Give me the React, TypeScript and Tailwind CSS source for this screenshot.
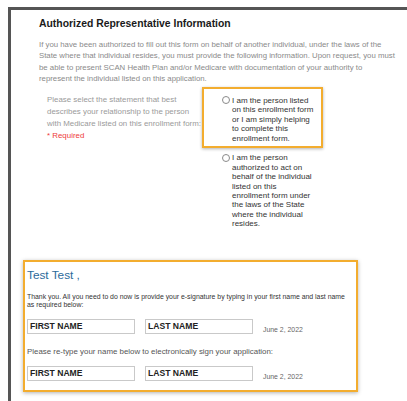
const arial = { fontFamily: '"Liberation Sans", Arial, sans-serif' };

function Radio({ lines }: { lines: string[] }) {
  return (
    <label className="flex items-start gap-[2px]">
      <span className="mt-[0.7px] h-[8px] w-[8px] shrink-0 rounded-full border border-[#8a8a8a] bg-white" />
      <span className="text-[8px] leading-[9.45px] text-[#333]">
        {lines.map((l, i) => (
          <span key={i} className="block whitespace-nowrap">
            {l}
          </span>
        ))}
      </span>
    </label>
  );
}

function NameRow() {
  return (
    <div className="flex items-start">
      <div className="flex h-[15px] w-[108px] items-center border border-[#c9c9c9] pl-[2px] text-[8.6px] font-bold text-[#222]">
        FIRST NAME
      </div>
      <div className="ml-[10px] flex h-[15px] w-[108px] items-center border border-[#c9c9c9] pl-[2px] text-[8.6px] font-bold text-[#222]">
        LAST NAME
      </div>
      <span className="ml-[10px] mt-[7px] text-[6.9px] leading-[8px] text-[#666]">June 2, 2022</span>
    </div>
  );
}

export default function App() {
  return (
    <div className="h-[401px] w-[407px] overflow-hidden bg-white pl-[8px] pt-[7px]" style={arial}>
      <div className="h-full border-l-[3px] border-t-[3px] border-[#555]">
        <div className="pl-[28px] pt-[8px]">
          <h2 className="text-[10.4px] font-bold leading-[12px] text-[#1a1a1a]">
            Authorized Representative Information
          </h2>
          <p className="mt-[9px] text-[7.8px] leading-[11.3px] text-[#8a8a8a]">
            <span className="block whitespace-nowrap">
              If you have been authorized to fill out this form on behalf of another individual, under the laws of the
            </span>
            <span className="block whitespace-nowrap">
              State where that individual resides, you must provide the following information. Upon request, you must
            </span>
            <span className="block whitespace-nowrap">
              be able to present SCAN Health Plan and/or Medicare with documentation of your authority to
            </span>
            <span className="block whitespace-nowrap">represent the individual listed on this application.</span>
          </p>

          <div className="ml-[8px] mt-[3px] flex">
            <div className="w-[155px] pt-[7.3px] text-[7.9px] leading-[11.7px] text-[#9a9a9a]">
              <span className="block whitespace-nowrap">Please select the statement that best</span>
              <span className="block whitespace-nowrap">describes your relationship to the person</span>
              <span className="block whitespace-nowrap">with Medicare listed on this enrollment form:</span>
              <span className="block text-[#ee3b3b]">* Required</span>
            </div>
            <div className="w-[121px]">
              <div className="h-[61px] border-2 border-[#f3ad2f] pl-[18px] pt-[6.5px] shadow-[0_1px_3px_rgba(0,0,0,0.3)]">
                <Radio
                  lines={[
                    'I am the person listed',
                    'on this enrollment form',
                    'or I am simply helping',
                    'to complete this',
                    'enrollment form.',
                  ]}
                />
              </div>
              <div className="mt-[5px] pl-[20px]">
                <Radio
                  lines={[
                    'I am the person',
                    'authorized to act on',
                    'behalf of the individual',
                    'listed on this',
                    'enrollment form under',
                    'the laws of the State',
                    'where the individual',
                    'resides.',
                  ]}
                />
              </div>
            </div>
          </div>
        </div>

        <div className="ml-[12px] mt-[31px] w-[335px] border-2 border-[#f3ad2f] pb-[9px] pl-[2px] pt-[7px] shadow-[0_1px_4px_rgba(0,0,0,0.3)]">
          <div className="text-[11.8px] leading-[13px] text-[#2c6a9b]">Test Test ,</div>
          <p className="mt-[11px] text-[6.9px] leading-[8.4px] text-[#333]">
            Thank you. All you need to do now is provide your e-signature by typing in your first name and last name
            <br />
            as required below:
          </p>
          <div className="mt-[9.5px]">
            <NameRow />
          </div>
          <p className="mt-[13px] text-[7.9px] leading-[9px] text-[#555]">
            Please re-type your name below to electronically sign your application:
          </p>
          <div className="mt-[10px]">
            <NameRow />
          </div>
        </div>
      </div>
    </div>
  );
}
